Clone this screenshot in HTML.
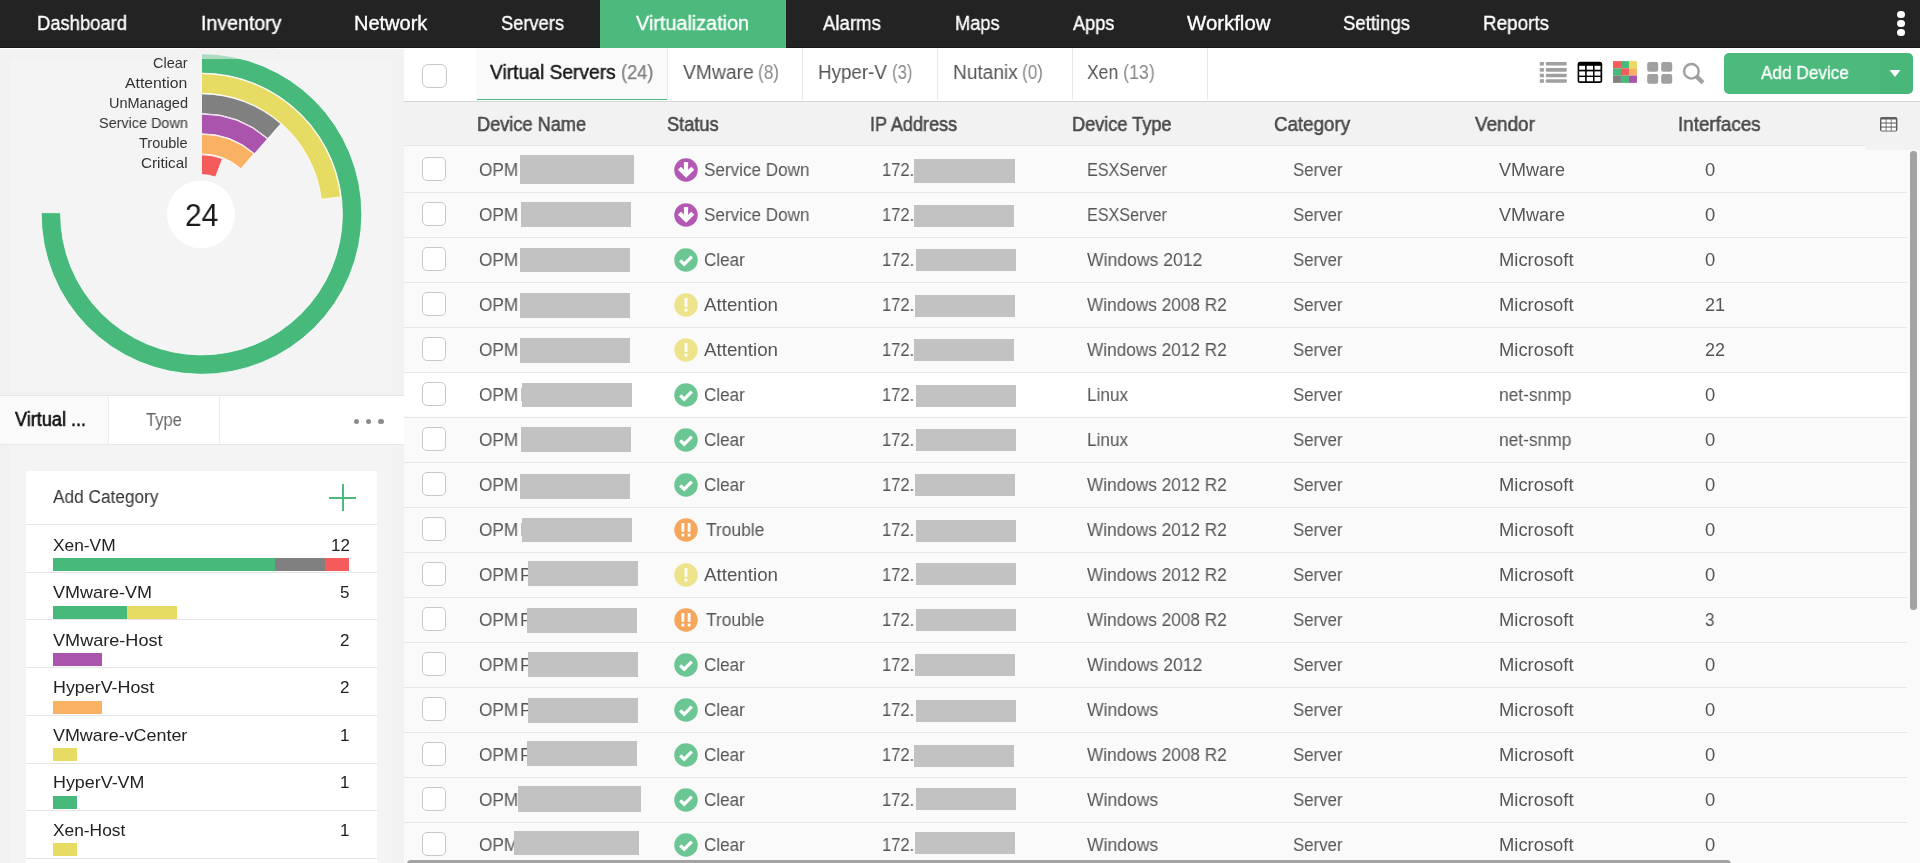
<!DOCTYPE html><html><head><meta charset="utf-8"><style>
html,body{margin:0;padding:0;width:1920px;height:863px;overflow:hidden;background:#f2f2f2}
body{position:relative;font-family:"Liberation Sans",sans-serif}
.t{position:absolute;white-space:nowrap;transform-origin:0 0;will-change:transform}
.r{position:absolute}
.cb{position:absolute;box-sizing:border-box;border:1.5px solid #c8c8c8;border-radius:5px;background:#fff}
</style></head><body>
<div class="r" style="left:0px;top:0px;width:1920px;height:863px;background:#f2f2f2;"></div>
<div class="r" style="left:404px;top:48px;width:1516px;height:815px;background:#fafafa;"></div>
<div class="r" style="left:0px;top:0px;width:1920px;height:47px;background:#232323;"></div>
<div class="r" style="left:0px;top:47px;width:1920px;height:1px;background:#171717;"></div>
<div class="r" style="left:0px;top:48px;width:404px;height:1px;background:#ffffff;"></div>
<div class="r" style="left:600px;top:0px;width:186px;height:48px;background:#4bba7c;"></div>
<div class="t" style="left:37.20px;top:13.00px;font-size:20px;line-height:20px;color:#ffffff;transform:scaleX(0.9202);-webkit-text-stroke:0.35px #fff;">Dashboard</div>
<div class="t" style="left:200.50px;top:13.00px;font-size:20px;line-height:20px;color:#ffffff;transform:scaleX(0.9781);-webkit-text-stroke:0.35px #fff;">Inventory</div>
<div class="t" style="left:354.00px;top:13.00px;font-size:20px;line-height:20px;color:#ffffff;-webkit-text-stroke:0.35px #fff;">Network</div>
<div class="t" style="left:500.50px;top:13.00px;font-size:20px;line-height:20px;color:#ffffff;transform:scaleX(0.9144);-webkit-text-stroke:0.35px #fff;">Servers</div>
<div class="t" style="left:636.00px;top:13.00px;font-size:20px;line-height:20px;color:#ffffff;transform:scaleX(0.9904);-webkit-text-stroke:0.35px #fff;">Virtualization</div>
<div class="t" style="left:822.70px;top:13.00px;font-size:20px;line-height:20px;color:#ffffff;transform:scaleX(0.9293);-webkit-text-stroke:0.35px #fff;">Alarms</div>
<div class="t" style="left:954.70px;top:13.00px;font-size:20px;line-height:20px;color:#ffffff;transform:scaleX(0.9100);-webkit-text-stroke:0.35px #fff;">Maps</div>
<div class="t" style="left:1072.60px;top:13.00px;font-size:20px;line-height:20px;color:#ffffff;transform:scaleX(0.9079);-webkit-text-stroke:0.35px #fff;">Apps</div>
<div class="t" style="left:1186.50px;top:13.00px;font-size:20px;line-height:20px;color:#ffffff;transform:scaleX(1.0195);-webkit-text-stroke:0.35px #fff;">Workflow</div>
<div class="t" style="left:1343.00px;top:13.00px;font-size:20px;line-height:20px;color:#ffffff;transform:scaleX(0.9267);-webkit-text-stroke:0.35px #fff;">Settings</div>
<div class="t" style="left:1483.00px;top:13.00px;font-size:20px;line-height:20px;color:#ffffff;transform:scaleX(0.9429);-webkit-text-stroke:0.35px #fff;">Reports</div>
<div class="r" style="left:1897.4px;top:10.700000000000001px;width:7.2px;height:7.2px;border-radius:50%;background:#fff"></div>
<div class="r" style="left:1897.4px;top:19.799999999999997px;width:7.2px;height:7.2px;border-radius:50%;background:#fff"></div>
<div class="r" style="left:1897.4px;top:28.9px;width:7.2px;height:7.2px;border-radius:50%;background:#fff"></div>
<div class="r" style="left:10px;top:59px;width:382px;height:333px;background:#f4f4f4;border-radius:3px"></div>
<svg class="r" style="left:0;top:0" width="404" height="400" viewBox="0 0 404 400"><path d="M201.5,53.69999999999999 A160.3,160.3 0 1 1 41.21,212.60 L60.61,212.77 A140.9,140.9 0 1 0 201.5,73.1 Z" fill="#47b97b" stroke="#fff" stroke-width="0.8"/><path d="M201.5,73.69999999999999 A140.3,140.3 0 0 1 340.75,196.90 L321.30,199.29 A120.7,120.7 0 0 0 201.5,93.3 Z" fill="#e6dc63" stroke="#fff" stroke-width="0.8"/><path d="M201.5,93.9 A120.1,120.1 0 0 1 280.77,123.77 L267.83,138.50 A100.5,100.5 0 0 0 201.5,113.5 Z" fill="#808080" stroke="#fff" stroke-width="0.8"/><path d="M201.5,114.1 A99.9,99.9 0 0 1 267.43,138.95 L254.50,153.67 A80.3,80.3 0 0 0 201.5,133.7 Z" fill="#ab54ae" stroke="#fff" stroke-width="0.8"/><path d="M201.5,134.3 A79.7,79.7 0 0 1 253.79,153.85 L240.93,168.64 A60.1,60.1 0 0 0 201.5,153.9 Z" fill="#f9b164" stroke="#fff" stroke-width="0.8"/><path d="M201.5,154.8 A59.2,59.2 0 0 1 222.52,158.66 L215.53,177.07 A39.5,39.5 0 0 0 201.5,174.5 Z" fill="#f65b5b" stroke="#fff" stroke-width="0.8"/><circle cx="201" cy="214.4" r="34" fill="#fff"/><rect x="195" y="48" width="80" height="11" fill="#f2f2f2" fill-opacity="0.6"/></svg>
<div class="t" style="left:153.00px;top:55.80px;font-size:14.5px;line-height:14.5px;color:#333;transform:scaleX(0.9898);">Clear</div>
<div class="t" style="left:125.10px;top:76.00px;font-size:14.5px;line-height:14.5px;color:#333;transform:scaleX(1.0874);">Attention</div>
<div class="t" style="left:108.50px;top:95.70px;font-size:14.5px;line-height:14.5px;color:#333;transform:scaleX(0.9972);">UnManaged</div>
<div class="t" style="left:98.50px;top:115.60px;font-size:14.5px;line-height:14.5px;color:#333;transform:scaleX(0.9926);">Service Down</div>
<div class="t" style="left:138.60px;top:136.20px;font-size:14.5px;line-height:14.5px;color:#333;">Trouble</div>
<div class="t" style="left:140.70px;top:156.20px;font-size:14.5px;line-height:14.5px;color:#333;transform:scaleX(1.0520);">Critical</div>
<div class="t" style="left:185.00px;top:200.00px;font-size:31px;line-height:31px;color:#1a1a1a;transform:scaleX(0.9648);">24</div>
<div class="r" style="left:0px;top:395px;width:404px;height:1px;background:#e6e6e6;"></div>
<div class="r" style="left:0px;top:396px;width:404px;height:48px;background:#ffffff;"></div>
<div class="r" style="left:0px;top:396px;width:108px;height:48px;background:#fafafa;"></div>
<div class="r" style="left:108px;top:396px;width:1px;height:48px;background:#ececec;"></div>
<div class="r" style="left:219px;top:396px;width:1px;height:48px;background:#ececec;"></div>
<div class="r" style="left:0px;top:444px;width:404px;height:1px;background:#e8e8e8;"></div>
<div class="t" style="left:15.25px;top:409.00px;font-size:20px;line-height:20px;color:#111;transform:scaleX(0.9033);-webkit-text-stroke:0.6px #111;">Virtual ...</div>
<div class="t" style="left:146.25px;top:410.00px;font-size:19px;line-height:19px;color:#666;transform:scaleX(0.8732);">Type</div>
<div class="r" style="left:353.6px;top:418.7px;width:5.4px;height:5.4px;border-radius:50%;background:#8c8c8c"></div>
<div class="r" style="left:365.8px;top:418.7px;width:5.4px;height:5.4px;border-radius:50%;background:#8c8c8c"></div>
<div class="r" style="left:378.2px;top:418.7px;width:5.4px;height:5.4px;border-radius:50%;background:#8c8c8c"></div>
<div class="r" style="left:10px;top:445px;width:383px;height:418px;background:#f4f4f4;"></div>
<div class="r" style="left:26px;top:471px;width:351px;height:392px;background:#ffffff;"></div>
<div class="t" style="left:53.00px;top:487.60px;font-size:18px;line-height:18px;color:#333;transform:scaleX(0.9585);">Add Category</div>
<div class="r" style="left:342px;top:484.2px;width:2px;height:26.7px;background:#4bba7c;"></div>
<div class="r" style="left:329.1px;top:496.5px;width:26.7px;height:2px;background:#4bba7c;"></div>
<div class="r" style="left:26px;top:524px;width:351px;height:1px;background:#e4e4e4;"></div>
<div class="t" style="left:53.00px;top:536.70px;font-size:17px;line-height:17px;color:#222;transform:scaleX(1.0186);">Xen-VM</div>
<div class="t" style="left:330.53px;top:536.70px;font-size:17px;line-height:17px;color:#222;">12</div>
<div class="r" style="left:53.0px;top:558.0px;width:222.38px;height:13.4px;background:#47b97b;"></div>
<div class="r" style="left:275.38px;top:558.0px;width:49.42px;height:13.4px;background:#808080;"></div>
<div class="r" style="left:324.79px;top:558.0px;width:24.71px;height:13.4px;background:#f65b5b;"></div>
<div class="r" style="left:26px;top:572px;width:351px;height:1px;background:#e4e4e4;"></div>
<div class="t" style="left:53.00px;top:584.20px;font-size:17px;line-height:17px;color:#222;transform:scaleX(1.0588);">VMware-VM</div>
<div class="t" style="left:339.96px;top:584.20px;font-size:17px;line-height:17px;color:#222;">5</div>
<div class="r" style="left:53.0px;top:605.5px;width:74.12px;height:13.4px;background:#47b97b;"></div>
<div class="r" style="left:127.12px;top:605.5px;width:49.42px;height:13.4px;background:#e6dc63;"></div>
<div class="r" style="left:26px;top:619px;width:351px;height:1px;background:#e4e4e4;"></div>
<div class="t" style="left:53.00px;top:631.70px;font-size:17px;line-height:17px;color:#222;transform:scaleX(1.0638);">VMware-Host</div>
<div class="t" style="left:339.96px;top:631.70px;font-size:17px;line-height:17px;color:#222;">2</div>
<div class="r" style="left:53.0px;top:653.0px;width:49.42px;height:13.4px;background:#ab54ae;"></div>
<div class="r" style="left:26px;top:667px;width:351px;height:1px;background:#e4e4e4;"></div>
<div class="t" style="left:53.00px;top:679.20px;font-size:17px;line-height:17px;color:#222;transform:scaleX(1.0509);">HyperV-Host</div>
<div class="t" style="left:339.96px;top:679.20px;font-size:17px;line-height:17px;color:#222;">2</div>
<div class="r" style="left:53.0px;top:700.5px;width:49.42px;height:13.4px;background:#f9b164;"></div>
<div class="r" style="left:26px;top:715px;width:351px;height:1px;background:#e4e4e4;"></div>
<div class="t" style="left:53.00px;top:726.70px;font-size:17px;line-height:17px;color:#222;transform:scaleX(1.0533);">VMware-vCenter</div>
<div class="t" style="left:339.96px;top:726.70px;font-size:17px;line-height:17px;color:#222;">1</div>
<div class="r" style="left:53.0px;top:748.0px;width:24px;height:13.4px;background:#e6dc63;"></div>
<div class="r" style="left:26px;top:763px;width:351px;height:1px;background:#e4e4e4;"></div>
<div class="t" style="left:53.00px;top:774.20px;font-size:17px;line-height:17px;color:#222;transform:scaleX(1.0523);">HyperV-VM</div>
<div class="t" style="left:339.96px;top:774.20px;font-size:17px;line-height:17px;color:#222;">1</div>
<div class="r" style="left:53.0px;top:795.5px;width:24px;height:13.4px;background:#47b97b;"></div>
<div class="r" style="left:26px;top:810px;width:351px;height:1px;background:#e4e4e4;"></div>
<div class="t" style="left:53.00px;top:821.70px;font-size:17px;line-height:17px;color:#222;transform:scaleX(1.0199);">Xen-Host</div>
<div class="t" style="left:339.96px;top:821.70px;font-size:17px;line-height:17px;color:#222;">1</div>
<div class="r" style="left:53.0px;top:843.0px;width:24px;height:13.4px;background:#e6dc63;"></div>
<div class="r" style="left:26px;top:858px;width:351px;height:1px;background:#e4e4e4;"></div>
<div class="r" style="left:404px;top:48px;width:1516px;height:53px;background:#ffffff;"></div>
<div class="r" style="left:476px;top:48px;width:191px;height:52px;background:#fafafa;"></div>
<div class="r" style="left:476.5px;top:98.8px;width:190.8px;height:1.6px;background:#4bba7c;"></div>
<div class="r" style="left:667px;top:48px;width:1px;height:52px;background:#e9e9e9;"></div>
<div class="r" style="left:802px;top:48px;width:1px;height:52px;background:#e9e9e9;"></div>
<div class="r" style="left:937px;top:48px;width:1px;height:52px;background:#e9e9e9;"></div>
<div class="r" style="left:1072px;top:48px;width:1px;height:52px;background:#e9e9e9;"></div>
<div class="r" style="left:1207px;top:48px;width:1px;height:52px;background:#e9e9e9;"></div>
<div class="r" style="left:404px;top:101px;width:1516px;height:1px;background:#d6d6d6;"></div>
<div class="cb" style="left:422.2px;top:64px;width:24.6px;height:24px;border-radius:6px"></div>
<div class="t" style="left:490.40px;top:62.00px;font-size:20px;line-height:20px;color:#1a1a1a;transform:scaleX(0.9610);-webkit-text-stroke:0.45px #1a1a1a;">Virtual Servers</div>
<div class="t" style="left:620.80px;top:62.00px;font-size:20px;line-height:20px;color:#808080;transform:scaleX(0.9073);-webkit-text-stroke:0.25px #808080;">(24)</div>
<div class="t" style="left:682.60px;top:62.00px;font-size:20px;line-height:20px;color:#555;transform:scaleX(0.9646);">VMware</div>
<div class="t" style="left:758.00px;top:62.00px;font-size:20px;line-height:20px;color:#888;transform:scaleX(0.8566);">(8)</div>
<div class="t" style="left:818.20px;top:62.00px;font-size:20px;line-height:20px;color:#555;transform:scaleX(0.9387);">Hyper-V</div>
<div class="t" style="left:891.70px;top:62.00px;font-size:20px;line-height:20px;color:#888;transform:scaleX(0.8361);">(3)</div>
<div class="t" style="left:952.90px;top:62.00px;font-size:20px;line-height:20px;color:#555;transform:scaleX(0.9558);">Nutanix</div>
<div class="t" style="left:1022.40px;top:62.00px;font-size:20px;line-height:20px;color:#888;transform:scaleX(0.8525);">(0)</div>
<div class="t" style="left:1087.00px;top:62.00px;font-size:20px;line-height:20px;color:#555;transform:scaleX(0.8764);">Xen</div>
<div class="t" style="left:1123.40px;top:62.00px;font-size:20px;line-height:20px;color:#888;transform:scaleX(0.8933);">(13)</div>
<svg class="r" style="left:1530px;top:55px" width="190" height="35" viewBox="0 0 190 35"><rect x="9.8" y="7" width="4.1" height="3.6" fill="#a0a0a0"/><rect x="15.75" y="7" width="21" height="3.6" rx="1" fill="#a0a0a0"/><rect x="9.8" y="13.1" width="4.1" height="3.6" fill="#a0a0a0"/><rect x="15.75" y="13.1" width="21" height="3.6" rx="1" fill="#a0a0a0"/><rect x="9.8" y="18.75" width="4.1" height="3.6" fill="#a0a0a0"/><rect x="15.75" y="18.75" width="21" height="3.6" rx="1" fill="#a0a0a0"/><rect x="9.8" y="24.2" width="4.1" height="3.6" fill="#a0a0a0"/><rect x="15.75" y="24.2" width="21" height="3.6" rx="1" fill="#a0a0a0"/><rect x="47.6" y="6.75" width="24.6" height="21.35" rx="2.5" fill="#000"/><rect x="49.2" y="10.8" width="5.9" height="3.9" fill="#fff"/><rect x="49.2" y="16.4" width="5.9" height="4.2" fill="#fff"/><rect x="49.2" y="22" width="5.9" height="4.25" fill="#fff"/><rect x="56.7" y="10.8" width="6.3" height="3.9" fill="#fff"/><rect x="56.7" y="16.4" width="6.3" height="4.2" fill="#fff"/><rect x="56.7" y="22" width="6.3" height="4.25" fill="#fff"/><rect x="64.5" y="10.8" width="6" height="3.9" fill="#fff"/><rect x="64.5" y="16.4" width="6" height="4.2" fill="#fff"/><rect x="64.5" y="22" width="6" height="4.25" fill="#fff"/><rect x="83.00" y="6.10" width="8" height="7.3" fill="#f65b5b"/><rect x="90.97" y="6.10" width="8" height="7.3" fill="#47b97b"/><rect x="98.94" y="6.10" width="8" height="7.3" fill="#e6dc63"/><rect x="83.00" y="13.33" width="8" height="7.3" fill="#47b97b"/><rect x="90.97" y="13.33" width="8" height="7.3" fill="#f65b5b"/><rect x="98.94" y="13.33" width="8" height="7.3" fill="#f9b164"/><rect x="83.00" y="20.56" width="8" height="7.3" fill="#808080"/><rect x="90.97" y="20.56" width="8" height="7.3" fill="#47b97b"/><rect x="98.94" y="20.56" width="8" height="7.3" fill="#ab54ae"/><rect x="117.2" y="7" width="11" height="9.7" rx="2" fill="#a0a0a0"/><rect x="117.2" y="19" width="11" height="9.7" rx="2" fill="#a0a0a0"/><rect x="131.2" y="7" width="11" height="9.7" rx="2" fill="#a0a0a0"/><rect x="131.2" y="19" width="11" height="9.7" rx="2" fill="#a0a0a0"/><circle cx="161.4" cy="16.3" r="7.3" fill="none" stroke="#a0a0a0" stroke-width="2.4"/><line x1="166" y1="20.9" x2="172.9" y2="27.8" stroke="#a0a0a0" stroke-width="4.4"/></svg>
<div class="r" style="left:1724px;top:53px;width:189px;height:41px;border-radius:5px;background:#4bba7c"></div>
<div class="r" style="left:1880px;top:53px;width:33px;height:41px;background:#47b378;border-radius:0 5px 5px 0;opacity:0.35"></div>
<div class="t" style="left:1761.00px;top:63.70px;font-size:18.5px;line-height:18.5px;color:#ffffff;transform:scaleX(0.9289);-webkit-text-stroke:0.3px #fff;">Add Device</div>
<svg class="r" style="left:1889px;top:69px" width="13" height="9"><path d="M0.5,1 L11.5,1 L6,8 Z" fill="#fff"/></svg>
<div class="r" style="left:404px;top:102px;width:1516px;height:43px;background:#f2f2f2;"></div>
<div class="r" style="left:404px;top:145px;width:1461px;height:1px;background:#e6e6e6;"></div>
<div class="t" style="left:477.00px;top:114.10px;font-size:20px;line-height:20px;color:#4a4a4a;transform:scaleX(0.9083);-webkit-text-stroke:0.55px #4a4a4a;">Device Name</div>
<div class="t" style="left:667.40px;top:114.10px;font-size:20px;line-height:20px;color:#4a4a4a;transform:scaleX(0.9101);-webkit-text-stroke:0.55px #4a4a4a;">Status</div>
<div class="t" style="left:869.90px;top:114.10px;font-size:20px;line-height:20px;color:#4a4a4a;transform:scaleX(0.9046);-webkit-text-stroke:0.55px #4a4a4a;">IP Address</div>
<div class="t" style="left:1071.70px;top:114.10px;font-size:20px;line-height:20px;color:#4a4a4a;transform:scaleX(0.9070);-webkit-text-stroke:0.55px #4a4a4a;">Device Type</div>
<div class="t" style="left:1273.50px;top:114.10px;font-size:20px;line-height:20px;color:#4a4a4a;transform:scaleX(0.9372);-webkit-text-stroke:0.55px #4a4a4a;">Category</div>
<div class="t" style="left:1475.40px;top:114.10px;font-size:20px;line-height:20px;color:#4a4a4a;transform:scaleX(0.9448);-webkit-text-stroke:0.55px #4a4a4a;">Vendor</div>
<div class="t" style="left:1677.70px;top:114.10px;font-size:20px;line-height:20px;color:#4a4a4a;transform:scaleX(0.9408);-webkit-text-stroke:0.55px #4a4a4a;">Interfaces</div>
<svg class="r" style="left:1879.5px;top:117.3px" width="18" height="15" viewBox="0 0 18 15"><rect x="0" y="0" width="17.4" height="14.6" rx="1.8" fill="#5e5e5e"/><rect x="1.4" y="2.50" width="4.3" height="3.0" fill="#fff"/><rect x="1.4" y="6.55" width="4.3" height="3.0" fill="#fff"/><rect x="1.4" y="10.60" width="4.3" height="3.0" fill="#fff"/><rect x="6.5" y="2.50" width="4.3" height="3.0" fill="#fff"/><rect x="6.5" y="6.55" width="4.3" height="3.0" fill="#fff"/><rect x="6.5" y="10.60" width="4.3" height="3.0" fill="#fff"/><rect x="11.6" y="2.50" width="4.3" height="3.0" fill="#fff"/><rect x="11.6" y="6.55" width="4.3" height="3.0" fill="#fff"/><rect x="11.6" y="10.60" width="4.3" height="3.0" fill="#fff"/></svg>
<div class="r" style="left:404px;top:146px;width:1503px;height:45px;background:#fafafa;"></div>
<div class="cb" style="left:422.3px;top:157px;width:23.5px;height:23.5px;"></div>
<div class="t" style="left:478.80px;top:161.00px;font-size:18px;line-height:18px;color:#555;transform:scaleX(0.9552);">OPM</div>
<div class="r" style="left:520.1px;top:155.2px;width:114.4px;height:28.4px;background:#c2c2c2;"></div>
<svg class="r" style="left:673.9px;top:158.4px" width="24" height="24" viewBox="0 0 24 24"><circle cx="12" cy="12" r="11.75" fill="#b159b3"/><rect x="9.9" y="4.1" width="4.2" height="11" fill="#fff"/><path d="M5.4,10.2 L12.1,16.8 L18.8,10.2" fill="none" stroke="#fff" stroke-width="4.3"/></svg>
<div class="t" style="left:704.20px;top:161.00px;font-size:18px;line-height:18px;color:#555;transform:scaleX(0.9499);">Service Down</div>
<div class="t" style="left:881.80px;top:161.00px;font-size:18px;line-height:18px;color:#555;transform:scaleX(0.9197);">172.</div>
<div class="r" style="left:914.3px;top:158.5px;width:100.6px;height:24.2px;background:#c2c2c2;"></div>
<div class="t" style="left:1087.10px;top:161.00px;font-size:18px;line-height:18px;color:#555;transform:scaleX(0.8977);">ESXServer</div>
<div class="t" style="left:1292.80px;top:161.00px;font-size:18px;line-height:18px;color:#555;transform:scaleX(0.9338);">Server</div>
<div class="t" style="left:1498.80px;top:161.00px;font-size:18px;line-height:18px;color:#555;transform:scaleX(0.9946);">VMware</div>
<div class="t" style="left:1704.50px;top:161.00px;font-size:18px;line-height:18px;color:#555;transform:scaleX(1.0210);">0</div>
<div class="r" style="left:404px;top:191px;width:1503px;height:45px;background:#fafafa;"></div>
<div class="cb" style="left:422.3px;top:202px;width:23.5px;height:23.5px;"></div>
<div class="t" style="left:478.80px;top:206.00px;font-size:18px;line-height:18px;color:#555;transform:scaleX(0.9552);">OPM</div>
<div class="r" style="left:521px;top:202px;width:109.8px;height:24.6px;background:#c2c2c2;"></div>
<svg class="r" style="left:673.9px;top:203.4px" width="24" height="24" viewBox="0 0 24 24"><circle cx="12" cy="12" r="11.75" fill="#b159b3"/><rect x="9.9" y="4.1" width="4.2" height="11" fill="#fff"/><path d="M5.4,10.2 L12.1,16.8 L18.8,10.2" fill="none" stroke="#fff" stroke-width="4.3"/></svg>
<div class="t" style="left:704.20px;top:206.00px;font-size:18px;line-height:18px;color:#555;transform:scaleX(0.9499);">Service Down</div>
<div class="t" style="left:881.80px;top:206.00px;font-size:18px;line-height:18px;color:#555;transform:scaleX(0.9197);">172.</div>
<div class="r" style="left:914.3px;top:205.3px;width:99.7px;height:21.3px;background:#c2c2c2;"></div>
<div class="t" style="left:1087.10px;top:206.00px;font-size:18px;line-height:18px;color:#555;transform:scaleX(0.8977);">ESXServer</div>
<div class="t" style="left:1292.80px;top:206.00px;font-size:18px;line-height:18px;color:#555;transform:scaleX(0.9338);">Server</div>
<div class="t" style="left:1498.80px;top:206.00px;font-size:18px;line-height:18px;color:#555;transform:scaleX(0.9946);">VMware</div>
<div class="t" style="left:1704.50px;top:206.00px;font-size:18px;line-height:18px;color:#555;transform:scaleX(1.0210);">0</div>
<div class="r" style="left:404px;top:236px;width:1503px;height:45px;background:#fafafa;"></div>
<div class="cb" style="left:422.3px;top:247px;width:23.5px;height:23.5px;"></div>
<div class="t" style="left:478.80px;top:251.00px;font-size:18px;line-height:18px;color:#555;transform:scaleX(0.9552);">OPM</div>
<div class="r" style="left:520.1px;top:247.9px;width:109.9px;height:24.6px;background:#c2c2c2;"></div>
<svg class="r" style="left:673.9px;top:248.39999999999998px" width="24" height="24" viewBox="0 0 24 24"><circle cx="12" cy="12" r="11.75" fill="#6cc693"/><path d="M6.2,12.3 L10.2,16.2 L17.8,8.6" fill="none" stroke="#fff" stroke-width="3.2" stroke-linejoin="miter"/></svg>
<div class="t" style="left:704.20px;top:251.00px;font-size:18px;line-height:18px;color:#555;transform:scaleX(0.9484);">Clear</div>
<div class="t" style="left:881.80px;top:251.00px;font-size:18px;line-height:18px;color:#555;transform:scaleX(0.9197);">172.</div>
<div class="r" style="left:916px;top:249.1px;width:100.2px;height:21.7px;background:#c2c2c2;"></div>
<div class="t" style="left:1087.10px;top:251.00px;font-size:18px;line-height:18px;color:#555;transform:scaleX(0.9773);">Windows 2012</div>
<div class="t" style="left:1292.80px;top:251.00px;font-size:18px;line-height:18px;color:#555;transform:scaleX(0.9338);">Server</div>
<div class="t" style="left:1498.80px;top:251.00px;font-size:18px;line-height:18px;color:#555;transform:scaleX(1.0207);">Microsoft</div>
<div class="t" style="left:1704.50px;top:251.00px;font-size:18px;line-height:18px;color:#555;transform:scaleX(1.0210);">0</div>
<div class="r" style="left:404px;top:281px;width:1503px;height:45px;background:#fafafa;"></div>
<div class="cb" style="left:422.3px;top:292px;width:23.5px;height:23.5px;"></div>
<div class="t" style="left:478.80px;top:296.00px;font-size:18px;line-height:18px;color:#555;transform:scaleX(0.9552);">OPM</div>
<div class="r" style="left:520.1px;top:293px;width:109.9px;height:24.6px;background:#c2c2c2;"></div>
<svg class="r" style="left:673.9px;top:293.4px" width="24" height="24" viewBox="0 0 24 24"><circle cx="12" cy="12" r="11.75" fill="#ede38a"/><rect x="10.6" y="5" width="2.8" height="8.8" fill="#fff"/><rect x="10.6" y="15.6" width="2.8" height="3" fill="#fff"/></svg>
<div class="t" style="left:704.20px;top:296.00px;font-size:18px;line-height:18px;color:#555;transform:scaleX(1.0421);">Attention</div>
<div class="t" style="left:881.80px;top:296.00px;font-size:18px;line-height:18px;color:#555;transform:scaleX(0.9197);">172.</div>
<div class="r" style="left:915.1px;top:295px;width:99.8px;height:21.8px;background:#c2c2c2;"></div>
<div class="t" style="left:1087.10px;top:296.00px;font-size:18px;line-height:18px;color:#555;transform:scaleX(0.9571);">Windows 2008 R2</div>
<div class="t" style="left:1292.80px;top:296.00px;font-size:18px;line-height:18px;color:#555;transform:scaleX(0.9338);">Server</div>
<div class="t" style="left:1498.80px;top:296.00px;font-size:18px;line-height:18px;color:#555;transform:scaleX(1.0207);">Microsoft</div>
<div class="t" style="left:1704.50px;top:296.00px;font-size:18px;line-height:18px;color:#555;transform:scaleX(0.9810);">21</div>
<div class="r" style="left:404px;top:326px;width:1503px;height:45px;background:#fafafa;"></div>
<div class="cb" style="left:422.3px;top:337px;width:23.5px;height:23.5px;"></div>
<div class="t" style="left:478.80px;top:341.00px;font-size:18px;line-height:18px;color:#555;transform:scaleX(0.9552);">OPM</div>
<div class="r" style="left:520.1px;top:338px;width:109.9px;height:24.7px;background:#c2c2c2;"></div>
<svg class="r" style="left:673.9px;top:338.4px" width="24" height="24" viewBox="0 0 24 24"><circle cx="12" cy="12" r="11.75" fill="#ede38a"/><rect x="10.6" y="5" width="2.8" height="8.8" fill="#fff"/><rect x="10.6" y="15.6" width="2.8" height="3" fill="#fff"/></svg>
<div class="t" style="left:704.20px;top:341.00px;font-size:18px;line-height:18px;color:#555;transform:scaleX(1.0421);">Attention</div>
<div class="t" style="left:881.80px;top:341.00px;font-size:18px;line-height:18px;color:#555;transform:scaleX(0.9197);">172.</div>
<div class="r" style="left:914.3px;top:339.3px;width:99.7px;height:21.7px;background:#c2c2c2;"></div>
<div class="t" style="left:1087.10px;top:341.00px;font-size:18px;line-height:18px;color:#555;transform:scaleX(0.9571);">Windows 2012 R2</div>
<div class="t" style="left:1292.80px;top:341.00px;font-size:18px;line-height:18px;color:#555;transform:scaleX(0.9338);">Server</div>
<div class="t" style="left:1498.80px;top:341.00px;font-size:18px;line-height:18px;color:#555;transform:scaleX(1.0207);">Microsoft</div>
<div class="t" style="left:1704.50px;top:341.00px;font-size:18px;line-height:18px;color:#555;transform:scaleX(0.9810);">22</div>
<div class="r" style="left:404px;top:371px;width:1503px;height:45px;background:#ffffff;"></div>
<div class="cb" style="left:422.3px;top:382px;width:23.5px;height:23.5px;"></div>
<div class="t" style="left:478.80px;top:386.00px;font-size:18px;line-height:18px;color:#555;transform:scaleX(0.9552);">OPM</div>
<div class="t" style="left:519.50px;top:386.00px;font-size:18px;line-height:18px;color:#555;">I</div>
<div class="r" style="left:522.2px;top:382.7px;width:109.8px;height:24.3px;background:#c2c2c2;"></div>
<svg class="r" style="left:673.9px;top:383.4px" width="24" height="24" viewBox="0 0 24 24"><circle cx="12" cy="12" r="11.75" fill="#6cc693"/><path d="M6.2,12.3 L10.2,16.2 L17.8,8.6" fill="none" stroke="#fff" stroke-width="3.2" stroke-linejoin="miter"/></svg>
<div class="t" style="left:704.20px;top:386.00px;font-size:18px;line-height:18px;color:#555;transform:scaleX(0.9484);">Clear</div>
<div class="t" style="left:881.80px;top:386.00px;font-size:18px;line-height:18px;color:#555;transform:scaleX(0.9197);">172.</div>
<div class="r" style="left:916px;top:385.2px;width:100.2px;height:21.8px;background:#c2c2c2;"></div>
<div class="t" style="left:1087.10px;top:386.00px;font-size:18px;line-height:18px;color:#555;transform:scaleX(0.9554);">Linux</div>
<div class="t" style="left:1292.80px;top:386.00px;font-size:18px;line-height:18px;color:#555;transform:scaleX(0.9338);">Server</div>
<div class="t" style="left:1498.80px;top:386.00px;font-size:18px;line-height:18px;color:#555;transform:scaleX(0.9646);">net-snmp</div>
<div class="t" style="left:1704.50px;top:386.00px;font-size:18px;line-height:18px;color:#555;transform:scaleX(1.0210);">0</div>
<div class="r" style="left:404px;top:416px;width:1503px;height:45px;background:#fafafa;"></div>
<div class="cb" style="left:422.3px;top:427px;width:23.5px;height:23.5px;"></div>
<div class="t" style="left:478.80px;top:431.00px;font-size:18px;line-height:18px;color:#555;transform:scaleX(0.9552);">OPM</div>
<div class="r" style="left:521px;top:427.4px;width:109.8px;height:24.6px;background:#c2c2c2;"></div>
<svg class="r" style="left:673.9px;top:428.4px" width="24" height="24" viewBox="0 0 24 24"><circle cx="12" cy="12" r="11.75" fill="#6cc693"/><path d="M6.2,12.3 L10.2,16.2 L17.8,8.6" fill="none" stroke="#fff" stroke-width="3.2" stroke-linejoin="miter"/></svg>
<div class="t" style="left:704.20px;top:431.00px;font-size:18px;line-height:18px;color:#555;transform:scaleX(0.9484);">Clear</div>
<div class="t" style="left:881.80px;top:431.00px;font-size:18px;line-height:18px;color:#555;transform:scaleX(0.9197);">172.</div>
<div class="r" style="left:916px;top:429px;width:100.2px;height:22.2px;background:#c2c2c2;"></div>
<div class="t" style="left:1087.10px;top:431.00px;font-size:18px;line-height:18px;color:#555;transform:scaleX(0.9554);">Linux</div>
<div class="t" style="left:1292.80px;top:431.00px;font-size:18px;line-height:18px;color:#555;transform:scaleX(0.9338);">Server</div>
<div class="t" style="left:1498.80px;top:431.00px;font-size:18px;line-height:18px;color:#555;transform:scaleX(0.9646);">net-snmp</div>
<div class="t" style="left:1704.50px;top:431.00px;font-size:18px;line-height:18px;color:#555;transform:scaleX(1.0210);">0</div>
<div class="r" style="left:404px;top:461px;width:1503px;height:45px;background:#fafafa;"></div>
<div class="cb" style="left:422.3px;top:472px;width:23.5px;height:23.5px;"></div>
<div class="t" style="left:478.80px;top:476.00px;font-size:18px;line-height:18px;color:#555;transform:scaleX(0.9552);">OPM</div>
<div class="r" style="left:520.1px;top:474.2px;width:109.9px;height:24.6px;background:#c2c2c2;"></div>
<svg class="r" style="left:673.9px;top:473.4px" width="24" height="24" viewBox="0 0 24 24"><circle cx="12" cy="12" r="11.75" fill="#6cc693"/><path d="M6.2,12.3 L10.2,16.2 L17.8,8.6" fill="none" stroke="#fff" stroke-width="3.2" stroke-linejoin="miter"/></svg>
<div class="t" style="left:704.20px;top:476.00px;font-size:18px;line-height:18px;color:#555;transform:scaleX(0.9484);">Clear</div>
<div class="t" style="left:881.80px;top:476.00px;font-size:18px;line-height:18px;color:#555;transform:scaleX(0.9197);">172.</div>
<div class="r" style="left:915.1px;top:474.2px;width:99.8px;height:21.7px;background:#c2c2c2;"></div>
<div class="t" style="left:1087.10px;top:476.00px;font-size:18px;line-height:18px;color:#555;transform:scaleX(0.9571);">Windows 2012 R2</div>
<div class="t" style="left:1292.80px;top:476.00px;font-size:18px;line-height:18px;color:#555;transform:scaleX(0.9338);">Server</div>
<div class="t" style="left:1498.80px;top:476.00px;font-size:18px;line-height:18px;color:#555;transform:scaleX(1.0207);">Microsoft</div>
<div class="t" style="left:1704.50px;top:476.00px;font-size:18px;line-height:18px;color:#555;transform:scaleX(1.0210);">0</div>
<div class="r" style="left:404px;top:506px;width:1503px;height:45px;background:#fafafa;"></div>
<div class="cb" style="left:422.3px;top:517px;width:23.5px;height:23.5px;"></div>
<div class="t" style="left:478.80px;top:521.00px;font-size:18px;line-height:18px;color:#555;transform:scaleX(0.9552);">OPM</div>
<div class="t" style="left:519.50px;top:521.00px;font-size:18px;line-height:18px;color:#555;">I</div>
<div class="r" style="left:522.1px;top:518.4px;width:109.7px;height:24.0px;background:#c2c2c2;"></div>
<svg class="r" style="left:673.9px;top:518.4px" width="24" height="24" viewBox="0 0 24 24"><circle cx="12" cy="12" r="11.75" fill="#f5a65b"/><rect x="7.5" y="5" width="2.8" height="8.8" fill="#fff"/><rect x="7.5" y="15.6" width="2.8" height="3" fill="#fff"/><rect x="13.7" y="5" width="2.8" height="8.8" fill="#fff"/><rect x="13.7" y="15.6" width="2.8" height="3" fill="#fff"/></svg>
<div class="t" style="left:705.60px;top:521.00px;font-size:18px;line-height:18px;color:#555;transform:scaleX(0.9687);">Trouble</div>
<div class="t" style="left:881.80px;top:521.00px;font-size:18px;line-height:18px;color:#555;transform:scaleX(0.9197);">172.</div>
<div class="r" style="left:915.9px;top:519.7px;width:100.2px;height:21.9px;background:#c2c2c2;"></div>
<div class="t" style="left:1087.10px;top:521.00px;font-size:18px;line-height:18px;color:#555;transform:scaleX(0.9571);">Windows 2012 R2</div>
<div class="t" style="left:1292.80px;top:521.00px;font-size:18px;line-height:18px;color:#555;transform:scaleX(0.9338);">Server</div>
<div class="t" style="left:1498.80px;top:521.00px;font-size:18px;line-height:18px;color:#555;transform:scaleX(1.0207);">Microsoft</div>
<div class="t" style="left:1704.50px;top:521.00px;font-size:18px;line-height:18px;color:#555;transform:scaleX(1.0210);">0</div>
<div class="r" style="left:404px;top:551px;width:1503px;height:45px;background:#fafafa;"></div>
<div class="cb" style="left:422.3px;top:562px;width:23.5px;height:23.5px;"></div>
<div class="t" style="left:478.80px;top:566.00px;font-size:18px;line-height:18px;color:#555;transform:scaleX(0.9552);">OPM</div>
<div class="t" style="left:519.50px;top:566.00px;font-size:18px;line-height:18px;color:#555;">P</div>
<div class="r" style="left:528.3px;top:561px;width:109.7px;height:24.5px;background:#c2c2c2;"></div>
<svg class="r" style="left:673.9px;top:563.4px" width="24" height="24" viewBox="0 0 24 24"><circle cx="12" cy="12" r="11.75" fill="#ede38a"/><rect x="10.6" y="5" width="2.8" height="8.8" fill="#fff"/><rect x="10.6" y="15.6" width="2.8" height="3" fill="#fff"/></svg>
<div class="t" style="left:704.20px;top:566.00px;font-size:18px;line-height:18px;color:#555;transform:scaleX(1.0421);">Attention</div>
<div class="t" style="left:881.80px;top:566.00px;font-size:18px;line-height:18px;color:#555;transform:scaleX(0.9197);">172.</div>
<div class="r" style="left:915.9px;top:562.7px;width:100.2px;height:22.0px;background:#c2c2c2;"></div>
<div class="t" style="left:1087.10px;top:566.00px;font-size:18px;line-height:18px;color:#555;transform:scaleX(0.9571);">Windows 2012 R2</div>
<div class="t" style="left:1292.80px;top:566.00px;font-size:18px;line-height:18px;color:#555;transform:scaleX(0.9338);">Server</div>
<div class="t" style="left:1498.80px;top:566.00px;font-size:18px;line-height:18px;color:#555;transform:scaleX(1.0207);">Microsoft</div>
<div class="t" style="left:1704.50px;top:566.00px;font-size:18px;line-height:18px;color:#555;transform:scaleX(1.0210);">0</div>
<div class="r" style="left:404px;top:596px;width:1503px;height:45px;background:#fafafa;"></div>
<div class="cb" style="left:422.3px;top:607px;width:23.5px;height:23.5px;"></div>
<div class="t" style="left:478.80px;top:611.00px;font-size:18px;line-height:18px;color:#555;transform:scaleX(0.9552);">OPM</div>
<div class="t" style="left:519.50px;top:611.00px;font-size:18px;line-height:18px;color:#555;">P</div>
<div class="r" style="left:527px;top:607.9px;width:109.8px;height:24.8px;background:#c2c2c2;"></div>
<svg class="r" style="left:673.9px;top:608.4px" width="24" height="24" viewBox="0 0 24 24"><circle cx="12" cy="12" r="11.75" fill="#f5a65b"/><rect x="7.5" y="5" width="2.8" height="8.8" fill="#fff"/><rect x="7.5" y="15.6" width="2.8" height="3" fill="#fff"/><rect x="13.7" y="5" width="2.8" height="8.8" fill="#fff"/><rect x="13.7" y="15.6" width="2.8" height="3" fill="#fff"/></svg>
<div class="t" style="left:705.60px;top:611.00px;font-size:18px;line-height:18px;color:#555;transform:scaleX(0.9687);">Trouble</div>
<div class="t" style="left:881.80px;top:611.00px;font-size:18px;line-height:18px;color:#555;transform:scaleX(0.9197);">172.</div>
<div class="r" style="left:915.9px;top:608.7px;width:100.2px;height:21.9px;background:#c2c2c2;"></div>
<div class="t" style="left:1087.10px;top:611.00px;font-size:18px;line-height:18px;color:#555;transform:scaleX(0.9571);">Windows 2008 R2</div>
<div class="t" style="left:1292.80px;top:611.00px;font-size:18px;line-height:18px;color:#555;transform:scaleX(0.9338);">Server</div>
<div class="t" style="left:1498.80px;top:611.00px;font-size:18px;line-height:18px;color:#555;transform:scaleX(1.0207);">Microsoft</div>
<div class="t" style="left:1704.50px;top:611.00px;font-size:18px;line-height:18px;color:#555;transform:scaleX(0.9510);">3</div>
<div class="r" style="left:404px;top:641px;width:1503px;height:45px;background:#fafafa;"></div>
<div class="cb" style="left:422.3px;top:652px;width:23.5px;height:23.5px;"></div>
<div class="t" style="left:478.80px;top:656.00px;font-size:18px;line-height:18px;color:#555;transform:scaleX(0.9552);">OPM</div>
<div class="t" style="left:519.50px;top:656.00px;font-size:18px;line-height:18px;color:#555;">P</div>
<div class="r" style="left:528.3px;top:652.2px;width:109.7px;height:24.4px;background:#c2c2c2;"></div>
<svg class="r" style="left:673.9px;top:653.4px" width="24" height="24" viewBox="0 0 24 24"><circle cx="12" cy="12" r="11.75" fill="#6cc693"/><path d="M6.2,12.3 L10.2,16.2 L17.8,8.6" fill="none" stroke="#fff" stroke-width="3.2" stroke-linejoin="miter"/></svg>
<div class="t" style="left:704.20px;top:656.00px;font-size:18px;line-height:18px;color:#555;transform:scaleX(0.9484);">Clear</div>
<div class="t" style="left:881.80px;top:656.00px;font-size:18px;line-height:18px;color:#555;transform:scaleX(0.9197);">172.</div>
<div class="r" style="left:915px;top:653.8px;width:99.9px;height:22.0px;background:#c2c2c2;"></div>
<div class="t" style="left:1087.10px;top:656.00px;font-size:18px;line-height:18px;color:#555;transform:scaleX(0.9773);">Windows 2012</div>
<div class="t" style="left:1292.80px;top:656.00px;font-size:18px;line-height:18px;color:#555;transform:scaleX(0.9338);">Server</div>
<div class="t" style="left:1498.80px;top:656.00px;font-size:18px;line-height:18px;color:#555;transform:scaleX(1.0207);">Microsoft</div>
<div class="t" style="left:1704.50px;top:656.00px;font-size:18px;line-height:18px;color:#555;transform:scaleX(1.0210);">0</div>
<div class="r" style="left:404px;top:686px;width:1503px;height:45px;background:#fafafa;"></div>
<div class="cb" style="left:422.3px;top:697px;width:23.5px;height:23.5px;"></div>
<div class="t" style="left:478.80px;top:701.00px;font-size:18px;line-height:18px;color:#555;transform:scaleX(0.9552);">OPM</div>
<div class="t" style="left:519.50px;top:701.00px;font-size:18px;line-height:18px;color:#555;">P</div>
<div class="r" style="left:528.3px;top:698px;width:109.7px;height:24.6px;background:#c2c2c2;"></div>
<svg class="r" style="left:673.9px;top:698.4px" width="24" height="24" viewBox="0 0 24 24"><circle cx="12" cy="12" r="11.75" fill="#6cc693"/><path d="M6.2,12.3 L10.2,16.2 L17.8,8.6" fill="none" stroke="#fff" stroke-width="3.2" stroke-linejoin="miter"/></svg>
<div class="t" style="left:704.20px;top:701.00px;font-size:18px;line-height:18px;color:#555;transform:scaleX(0.9484);">Clear</div>
<div class="t" style="left:881.80px;top:701.00px;font-size:18px;line-height:18px;color:#555;transform:scaleX(0.9197);">172.</div>
<div class="r" style="left:915.9px;top:699.8px;width:100.2px;height:21.9px;background:#c2c2c2;"></div>
<div class="t" style="left:1087.10px;top:701.00px;font-size:18px;line-height:18px;color:#555;transform:scaleX(0.9755);">Windows</div>
<div class="t" style="left:1292.80px;top:701.00px;font-size:18px;line-height:18px;color:#555;transform:scaleX(0.9338);">Server</div>
<div class="t" style="left:1498.80px;top:701.00px;font-size:18px;line-height:18px;color:#555;transform:scaleX(1.0207);">Microsoft</div>
<div class="t" style="left:1704.50px;top:701.00px;font-size:18px;line-height:18px;color:#555;transform:scaleX(1.0210);">0</div>
<div class="r" style="left:404px;top:731px;width:1503px;height:45px;background:#fafafa;"></div>
<div class="cb" style="left:422.3px;top:742px;width:23.5px;height:23.5px;"></div>
<div class="t" style="left:478.80px;top:746.00px;font-size:18px;line-height:18px;color:#555;transform:scaleX(0.9552);">OPM</div>
<div class="t" style="left:519.50px;top:746.00px;font-size:18px;line-height:18px;color:#555;">P</div>
<div class="r" style="left:527px;top:741.2px;width:109.8px;height:24.8px;background:#c2c2c2;"></div>
<svg class="r" style="left:673.9px;top:743.4px" width="24" height="24" viewBox="0 0 24 24"><circle cx="12" cy="12" r="11.75" fill="#6cc693"/><path d="M6.2,12.3 L10.2,16.2 L17.8,8.6" fill="none" stroke="#fff" stroke-width="3.2" stroke-linejoin="miter"/></svg>
<div class="t" style="left:704.20px;top:746.00px;font-size:18px;line-height:18px;color:#555;transform:scaleX(0.9484);">Clear</div>
<div class="t" style="left:881.80px;top:746.00px;font-size:18px;line-height:18px;color:#555;transform:scaleX(0.9197);">172.</div>
<div class="r" style="left:913.8px;top:745px;width:100.2px;height:21.9px;background:#c2c2c2;"></div>
<div class="t" style="left:1087.10px;top:746.00px;font-size:18px;line-height:18px;color:#555;transform:scaleX(0.9571);">Windows 2008 R2</div>
<div class="t" style="left:1292.80px;top:746.00px;font-size:18px;line-height:18px;color:#555;transform:scaleX(0.9338);">Server</div>
<div class="t" style="left:1498.80px;top:746.00px;font-size:18px;line-height:18px;color:#555;transform:scaleX(1.0207);">Microsoft</div>
<div class="t" style="left:1704.50px;top:746.00px;font-size:18px;line-height:18px;color:#555;transform:scaleX(1.0210);">0</div>
<div class="r" style="left:404px;top:776px;width:1503px;height:45px;background:#fafafa;"></div>
<div class="cb" style="left:422.3px;top:787px;width:23.5px;height:23.5px;"></div>
<div class="t" style="left:478.80px;top:791.00px;font-size:18px;line-height:18px;color:#555;transform:scaleX(0.9552);">OPM</div>
<div class="r" style="left:518px;top:786.3px;width:123px;height:25.7px;background:#c2c2c2;"></div>
<svg class="r" style="left:673.9px;top:788.4px" width="24" height="24" viewBox="0 0 24 24"><circle cx="12" cy="12" r="11.75" fill="#6cc693"/><path d="M6.2,12.3 L10.2,16.2 L17.8,8.6" fill="none" stroke="#fff" stroke-width="3.2" stroke-linejoin="miter"/></svg>
<div class="t" style="left:704.20px;top:791.00px;font-size:18px;line-height:18px;color:#555;transform:scaleX(0.9484);">Clear</div>
<div class="t" style="left:881.80px;top:791.00px;font-size:18px;line-height:18px;color:#555;transform:scaleX(0.9197);">172.</div>
<div class="r" style="left:915.9px;top:788.4px;width:100.2px;height:21.9px;background:#c2c2c2;"></div>
<div class="t" style="left:1087.10px;top:791.00px;font-size:18px;line-height:18px;color:#555;transform:scaleX(0.9755);">Windows</div>
<div class="t" style="left:1292.80px;top:791.00px;font-size:18px;line-height:18px;color:#555;transform:scaleX(0.9338);">Server</div>
<div class="t" style="left:1498.80px;top:791.00px;font-size:18px;line-height:18px;color:#555;transform:scaleX(1.0207);">Microsoft</div>
<div class="t" style="left:1704.50px;top:791.00px;font-size:18px;line-height:18px;color:#555;transform:scaleX(1.0210);">0</div>
<div class="r" style="left:404px;top:821px;width:1503px;height:45px;background:#fafafa;"></div>
<div class="cb" style="left:422.3px;top:832px;width:23.5px;height:23.5px;"></div>
<div class="t" style="left:478.80px;top:836.00px;font-size:18px;line-height:18px;color:#555;transform:scaleX(0.9552);">OPM</div>
<div class="r" style="left:513.8px;top:830.6px;width:125.1px;height:24.0px;background:#c2c2c2;"></div>
<svg class="r" style="left:673.9px;top:833.4px" width="24" height="24" viewBox="0 0 24 24"><circle cx="12" cy="12" r="11.75" fill="#6cc693"/><path d="M6.2,12.3 L10.2,16.2 L17.8,8.6" fill="none" stroke="#fff" stroke-width="3.2" stroke-linejoin="miter"/></svg>
<div class="t" style="left:704.20px;top:836.00px;font-size:18px;line-height:18px;color:#555;transform:scaleX(0.9484);">Clear</div>
<div class="t" style="left:881.80px;top:836.00px;font-size:18px;line-height:18px;color:#555;transform:scaleX(0.9197);">172.</div>
<div class="r" style="left:915px;top:832.3px;width:99.9px;height:21.5px;background:#c2c2c2;"></div>
<div class="t" style="left:1087.10px;top:836.00px;font-size:18px;line-height:18px;color:#555;transform:scaleX(0.9755);">Windows</div>
<div class="t" style="left:1292.80px;top:836.00px;font-size:18px;line-height:18px;color:#555;transform:scaleX(0.9338);">Server</div>
<div class="t" style="left:1498.80px;top:836.00px;font-size:18px;line-height:18px;color:#555;transform:scaleX(1.0207);">Microsoft</div>
<div class="t" style="left:1704.50px;top:836.00px;font-size:18px;line-height:18px;color:#555;transform:scaleX(1.0210);">0</div>
<div class="r" style="left:404px;top:191.5px;width:1503px;height:1px;background:#e6e6e6;"></div>
<div class="r" style="left:404px;top:236.5px;width:1503px;height:1px;background:#e6e6e6;"></div>
<div class="r" style="left:404px;top:281.5px;width:1503px;height:1px;background:#e6e6e6;"></div>
<div class="r" style="left:404px;top:326.5px;width:1503px;height:1px;background:#e6e6e6;"></div>
<div class="r" style="left:404px;top:371.5px;width:1503px;height:1px;background:#e6e6e6;"></div>
<div class="r" style="left:404px;top:416.5px;width:1503px;height:1px;background:#e6e6e6;"></div>
<div class="r" style="left:404px;top:461.5px;width:1503px;height:1px;background:#e6e6e6;"></div>
<div class="r" style="left:404px;top:506.5px;width:1503px;height:1px;background:#e6e6e6;"></div>
<div class="r" style="left:404px;top:551.5px;width:1503px;height:1px;background:#e6e6e6;"></div>
<div class="r" style="left:404px;top:596.5px;width:1503px;height:1px;background:#e6e6e6;"></div>
<div class="r" style="left:404px;top:641.5px;width:1503px;height:1px;background:#e6e6e6;"></div>
<div class="r" style="left:404px;top:686.5px;width:1503px;height:1px;background:#e6e6e6;"></div>
<div class="r" style="left:404px;top:731.5px;width:1503px;height:1px;background:#e6e6e6;"></div>
<div class="r" style="left:404px;top:776.5px;width:1503px;height:1px;background:#e6e6e6;"></div>
<div class="r" style="left:404px;top:821.5px;width:1503px;height:1px;background:#e6e6e6;"></div>
<div class="r" style="left:404px;top:866.5px;width:1503px;height:1px;background:#e6e6e6;"></div>
<div class="r" style="left:1866px;top:145px;width:54px;height:5px;background:#f2f2f2;"></div>
<div class="r" style="left:1910.3px;top:151px;width:6.6px;height:459px;background:#a3a3a3;border-radius:3.3px"></div>
<div class="r" style="left:407px;top:860px;width:1324px;height:8px;background:#a3a3a3;border-radius:4px"></div>
</body></html>
